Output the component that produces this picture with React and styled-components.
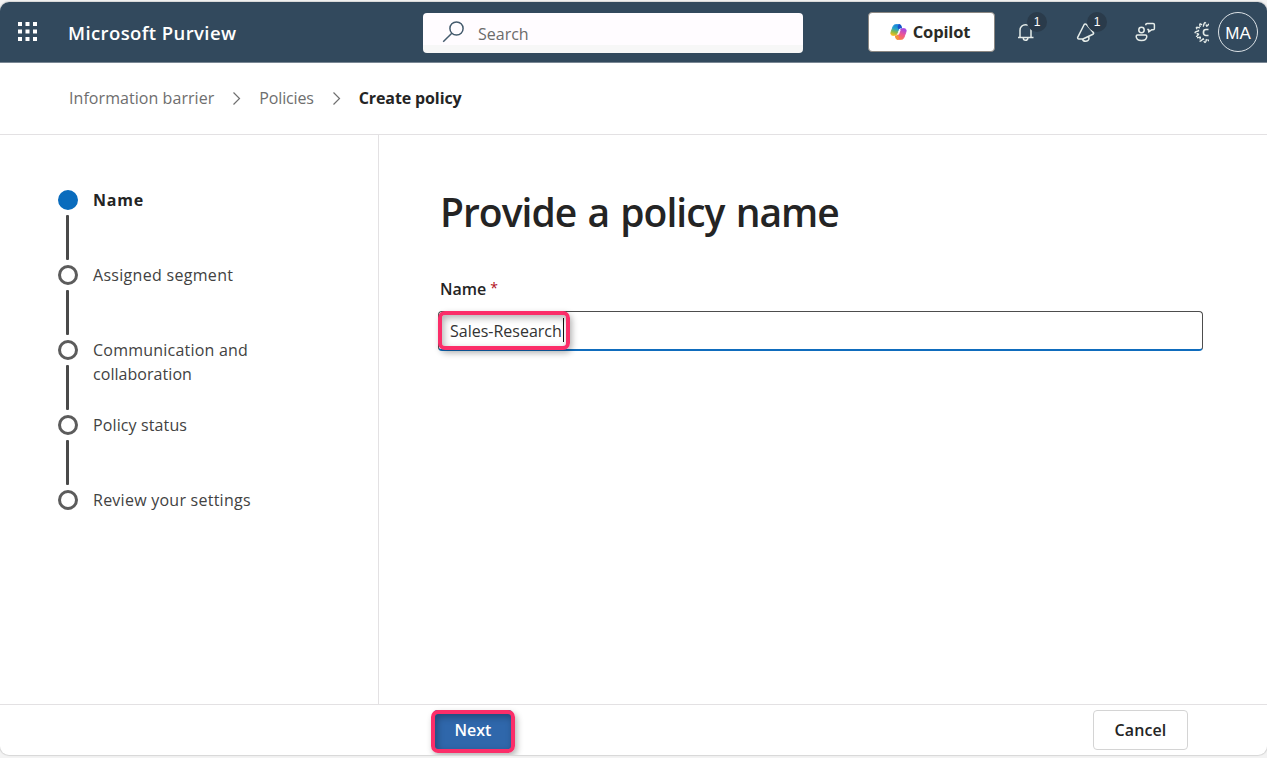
import React from "react";
import styled, { createGlobalStyle } from "styled-components";

const GlobalStyle = createGlobalStyle`
  *, *::before, *::after { box-sizing: border-box; }
  body {
    margin: 0;
    background: #f3f3f3;
    color: #242424;
    font-family: "Open Sans", "Noto Sans", sans-serif;
    overflow: hidden;
  }
  button, input { font-family: inherit; }
`;

const Label = styled.span`
  font-size: ${(p) => p.$size || 16}px;
  font-weight: ${(p) => p.$weight || 400};
  letter-spacing: ${(p) => p.$track || 0}px;
  line-height: ${(p) => p.$line || 24}px;
  color: ${(p) => p.$color || "inherit"};
  white-space: nowrap;
`;

const Page = styled.div`
  height: 758px;
  padding: 2px 0 3px;
`;

const AppWindow = styled.div`
  height: 753px;
  display: flex;
  flex-direction: column;
  background: #fff;
  border-radius: 9px;
  overflow: hidden;
  box-shadow: 0 0 1px 1px #d6d6d6;
`;

const Header = styled.header`
  height: 61px;
  flex: none;
  display: flex;
  align-items: center;
  background: #32495d;
  border-bottom: 1px solid #7a8794;
  color: #fff;
`;

const Brand = styled.div`
  width: 423px;
  display: flex;
  align-items: center;
  padding-left: 18px;
  gap: 30px;
  ${Label} { padding-top: 2px; }
`;

const SearchBox = styled.div`
  width: 380px;
  height: 40px;
  margin-top: 1px;
  display: flex;
  align-items: center;
  gap: 13px;
  padding: 2px 0 0 19px;
  border-radius: 4px;
  background: linear-gradient(#fffcff 32px, #f7f7f7 32px);
  svg { margin-top: -4px; }
`;

const CopilotButton = styled.button`
  width: 127px;
  height: 40px;
  margin: -1px 0 0 65px;
  padding: 0 3px 0 0;
  display: flex;
  align-items: center;
  justify-content: center;
  gap: 6px;
  border: 1px solid #8b8782;
  border-radius: 4px;
  background: #fff;
  color: #2b2b26;
`;

const HeaderActions = styled.div`
  flex: 1;
  display: flex;
  align-items: center;
  padding-left: 19px;
`;

const IconSlot = styled.div`
  position: relative;
  width: ${(p) => p.$width}px;
  height: 24px;
  flex: none;
  display: flex;
  align-items: center;
`;

const Badge = styled.span`
  position: absolute;
  left: 13px;
  top: -8px;
  width: 20px;
  height: 20px;
  border-radius: 50%;
  background: #2a3b4b;
  font: 12px/20px "Liberation Sans", Arial, sans-serif;
  text-align: center;
`;

const Avatar = styled.div`
  width: 40px;
  height: 40px;
  flex: none;
  border: 1px solid #dce2e6;
  border-radius: 50%;
  font: 17px/42px "Liberation Sans", Arial, sans-serif;
  text-align: center;
`;

const Breadcrumbs = styled.nav`
  height: 72px;
  flex: none;
  display: flex;
  align-items: center;
  padding: 0 0 2px 69px;
  border-bottom: 1px solid #e3e1e3;
  svg { flex: none; margin: 1px 18px 0 18px; }
`;

const Body = styled.main`
  flex: 1;
  display: flex;
`;

const Steps = styled.ol`
  width: 379px;
  margin: 0;
  padding: 55px 0 0 58px;
  list-style: none;
  border-right: 1px solid #e3e1e3;
`;

const Step = styled.li`
  height: 75px;
  display: flex;
  gap: 15px;
`;

const StepRail = styled.div`
  width: 20px;
  display: flex;
  flex-direction: column;
  align-items: center;
  gap: 5px;
`;

const StepDot = styled.span`
  width: 20px;
  height: 20px;
  border-radius: 50%;
  border: 3px solid ${(p) => (p.$active ? "#0a6cbd" : "#5c5c5c")};
  background: ${(p) => (p.$active ? "#0a6cbd" : "#fff")};
`;

const StepLine = styled.span`
  width: 3px;
  height: 45px;
  margin-right: 1px;
  border-radius: 1px;
  background: #4a4a4a;
`;

const StepText = styled.div`
  display: flex;
  flex-direction: column;
  margin-top: -2px;
`;

const Form = styled.section`
  flex: 1;
  padding: 49px 64px 0 61px;
`;

const Title = styled.h1`
  margin: 0;
  font-size: 39px;
  font-weight: 600;
  line-height: 56px;
  letter-spacing: -0.97px;
  word-spacing: 2px;
  white-space: nowrap;
`;

const FieldLabel = styled.div`
  display: flex;
  gap: 4px;
  margin: 37px 0 10px;
`;

const Field = styled.div`
  position: relative;
  width: 765px;
  height: 40px;
  margin-left: -2px;
  display: flex;
  align-items: center;
  padding: 1px 0 0 11px;
  border: 1px solid #4d4d4d;
  border-bottom: 2px solid #0f6cbd;
  border-radius: 4px;
`;

const Caret = styled.span`
  width: 1px;
  height: 24px;
  margin: -2px 0 0 1px;
  background: #111;
`;

const Highlight = styled.span`
  position: absolute;
  left: ${(p) => p.$left}px;
  top: ${(p) => p.$top}px;
  width: ${(p) => p.$width}px;
  height: ${(p) => p.$height}px;
  border: 4px solid #fb2e69;
  border-radius: 7px;
  box-shadow: 2px 3px 6px rgba(0, 0, 0, 0.3), inset 2px 3px 7px rgba(0, 0, 0, 0.3);
`;

const Footer = styled.footer`
  height: 51px;
  flex: none;
  display: flex;
  justify-content: space-between;
  padding: 5px 79px 0 433px;
  border-top: 1px solid #e3e1e3;
`;

const FooterButton = styled.button`
  position: relative;
  width: ${(p) => (p.$primary ? 80 : 95)}px;
  height: 40px;
  padding: 0 0 1px;
  border: 1px solid ${(p) => (p.$primary ? "#2f67ab" : "#d4d4d4")};
  border-radius: 4px;
  background: ${(p) => (p.$primary ? "#2f67ab" : "#fff")};
  color: ${(p) => (p.$primary ? "#fff" : "#242424")};
`;

const WaffleIcon = () => (
  <svg width="20" height="20" viewBox="0 0 20 20" fill="#fff">
    {[0, 7.5, 15].map((y) => [0, 7.5, 15].map((x) => (
      <rect key={`${x}-${y}`} x={x} y={y} width="4" height="4" />
    )))}
  </svg>
);

const SearchIcon = () => (
  <svg width="23" height="23" viewBox="0 0 23 23" fill="none" stroke="#445b6d" strokeWidth="1.5">
    <circle cx="14.5" cy="8.5" r="6.6" />
    <path d="M9.8 13.2 1.2 21.7" />
  </svg>
);

const CopilotIcon = () => (
  <svg width="17" height="16" viewBox="0 0 17 16" strokeLinejoin="round">
    <defs>
      <linearGradient id="cpLeft" x1="0.6" y1="0" x2="0.3" y2="1">
        <stop offset="0" stopColor="#1583dc" />
        <stop offset="0.4" stopColor="#26a4c9" />
        <stop offset="0.7" stopColor="#83b94c" />
        <stop offset="1" stopColor="#f2bd1c" />
      </linearGradient>
      <linearGradient id="cpRight" x1="0.7" y1="0" x2="0.3" y2="1">
        <stop offset="0" stopColor="#a449e2" />
        <stop offset="0.5" stopColor="#ee5693" />
        <stop offset="1" stopColor="#fb7c45" />
      </linearGradient>
    </defs>
    <path d="M11 2.200C10.600 1 10 .7 9 .7H5.800C4.300.7 3.500 1.400 3 2.800L1.100 8C.4 10.200 1.200 11.300 2.800 11.300h2c1.200 0 1.800-.7 2.200-1.900L8.500 5.600C8.900 4.400 9.500 3.800 10.700 3.800h.8z" fill="url(#cpLeft)" stroke="url(#cpLeft)" />
    <path d="M6 13.800c.4 1.200 1 1.500 2 1.500h3.200c1.500 0 2.300-.7 2.800-2.100l1.900-5.200c.7-2.200-.1-3.300-1.700-3.300h-2c-1.200 0-1.800.7-2.200 1.900l-1.500 3.800c-.4 1.200-1 1.800-2.200 1.800h-.8z" fill="url(#cpRight)" stroke="url(#cpRight)" />
    <path d="M8.800.3c1.300 0 2 .3 2.400 1.500l.8 2.400h-1.200c-1.100 0-1.700.5-2.100 1.500L7.500 3z" fill="#1b4fca" />
    <path d="M8.200 15.700c-1.300 0-2-.3-2.400-1.500L5 11.800c1.100 0 1.900-.5 2.300-1.500L9 13z" fill="#f79238" />
    <path d="M9.400 5.800h1.300l-1.700 4.600H7.700z" fill="#fff" />
  </svg>
);

const BellIcon = () => (
  <svg width="22" height="24" viewBox="0 0 22 24" fill="none" stroke="#e5ece9" strokeWidth="1.5">
    <path d="M6 17.500V10.200a5.500 5.500 0 0 1 11 0v7.300M4 17.500h15.500M9.300 18a2.300 2.300 0 0 0 4.600 0" />
  </svg>
);

const MegaphoneIcon = () => (
  <svg width="22" height="24" viewBox="0 0 22 24" fill="none" stroke="#e5ece9" strokeWidth="1.5" strokeLinejoin="round">
    <path d="M10.200 4.500 3.800 17.200c-.5 1 0 1.800 1.100 1.800h4L19 14.200c.8-.4.800-1 .3-1.700L12.500 4.500c-.8-.8-1.800-.8-2.300 0z" />
    <path d="M8.500 19c.3 1.500 1.500 2.300 3.200 2.300s3.300-1.500 3.300-3.100c0-.8-.3-1.400-.9-1.700" />
  </svg>
);

const FeedbackIcon = () => (
  <svg width="22" height="24" viewBox="0 0 22 24" fill="none" stroke="#e5ece9" strokeWidth="1.5" strokeLinejoin="round">
    <circle cx="7.500" cy="10" r="2.700" />
    <path d="M3.500 15h8c.8 0 1.300.5 1.300 1.200 0 2.500-1.900 4.300-5.300 4.300S2.200 18.700 2.200 16.200C2.200 15.500 2.700 15 3.500 15z" />
    <path d="M11.800 5.200V4.700c0-.8.5-1.300 1.300-1.300h6c.8 0 1.300.5 1.300 1.300v3.700c0 .8-.5 1.300-1.300 1.300h-1.200L14.700 12V9.600h-1.500" />
  </svg>
);

const gearOutline = Array.from({ length: 121 }, (_, i) => {
  const angle = (i / 120) * Math.PI * 2;
  const radius = 8.3 + 1.6 * Math.cos(12 * angle);
  return `${(11 + radius * Math.cos(angle)).toFixed(2)},${(12.5 + radius * Math.sin(angle)).toFixed(2)}`;
}).join(" ");

const GearIcon = () => (
  <svg width="14.500" height="24" viewBox="0 0 14.500 24" fill="none" stroke="#e5ece9" strokeWidth="1.4">
    <polyline points={gearOutline} strokeDasharray="5.500 1.200" />
    <path d="M14.500 9.500H12a2.500 2.500 0 0 0-2.500 2.500v1a2.500 2.500 0 0 0 2.500 2.500h2.500" strokeWidth="1.7" />
  </svg>
);

const ChevronIcon = () => (
  <svg width="9" height="14" viewBox="0 0 9 14" fill="none" stroke="#707070" strokeWidth="1.200">
    <path d="m1.500 1.500 6 6L1.500 13.500" />
  </svg>
);

const steps = [
  { lines: [{ text: "Name", track: 0.75 }], active: true },
  { lines: [{ text: "Assigned segment", track: 0.3 }] },
  { lines: [{ text: "Communication and", track: 0.22 }, { text: "collaboration", track: 0.05 }] },
  { lines: [{ text: "Policy status", track: 0.12 }] },
  { lines: [{ text: "Review your settings", track: 0.25 }] },
];

export default function App() {
  return (
    <Page>
      <GlobalStyle />
      <AppWindow>
        <Header>
          <Brand>
            <WaffleIcon />
            <Label $size={18.5} $weight={600} $track={0.4}>Microsoft Purview</Label>
          </Brand>
          <SearchBox>
            <SearchIcon />
            <Label $color="#6b6b6b">Search</Label>
          </SearchBox>
          <CopilotButton>
            <CopilotIcon />
            <Label $size={16.5} $weight={700} $track={-0.15}>Copilot</Label>
          </CopilotButton>
          <HeaderActions>
            <IconSlot $width={60}><BellIcon /><Badge>1</Badge></IconSlot>
            <IconSlot $width={60}><MegaphoneIcon /><Badge>1</Badge></IconSlot>
            <IconSlot $width={60}><FeedbackIcon /></IconSlot>
            <IconSlot $width={24}><GearIcon /></IconSlot>
            <Avatar>MA</Avatar>
          </HeaderActions>
        </Header>
        <Breadcrumbs>
          <Label $color="#6e6e6e" $track={0.06}>Information barrier</Label>
          <ChevronIcon />
          <Label $color="#6e6e6e" $track={-0.15}>Policies</Label>
          <ChevronIcon />
          <Label $weight={700} $track={-0.12}>Create policy</Label>
        </Breadcrumbs>
        <Body>
          <Steps>
            {steps.map((step, i) => (
              <Step key={i}>
                <StepRail>
                  <StepDot $active={step.active} />
                  {i < steps.length - 1 && <StepLine />}
                </StepRail>
                <StepText>
                  {step.lines.map((line) => (
                    <Label key={line.text} $weight={step.active ? 700 : 400} $track={line.track} $color={step.active ? "#242424" : "#424242"}>
                      {line.text}
                    </Label>
                  ))}
                </StepText>
              </Step>
            ))}
          </Steps>
          <Form>
            <Title>Provide a policy name</Title>
            <FieldLabel>
              <Label $weight={600}>Name</Label>
              <Label $color="#b10e1c" $size={14} $line={21}>*</Label>
            </FieldLabel>
            <Field>
              <Label $color="#333">Sales-Research</Label>
              <Caret />
              <Highlight $left={-1} $top={-1} $width={132} $height={39} />
            </Field>
          </Form>
        </Body>
        <Footer>
          <FooterButton $primary>
            <Label $weight={600}>Next</Label>
            <Highlight $left={-3} $top={-1} $width={84} $height={43} />
          </FooterButton>
          <FooterButton>
            <Label $weight={600} $track={0.1}>Cancel</Label>
          </FooterButton>
        </Footer>
      </AppWindow>
    </Page>
  );
}
